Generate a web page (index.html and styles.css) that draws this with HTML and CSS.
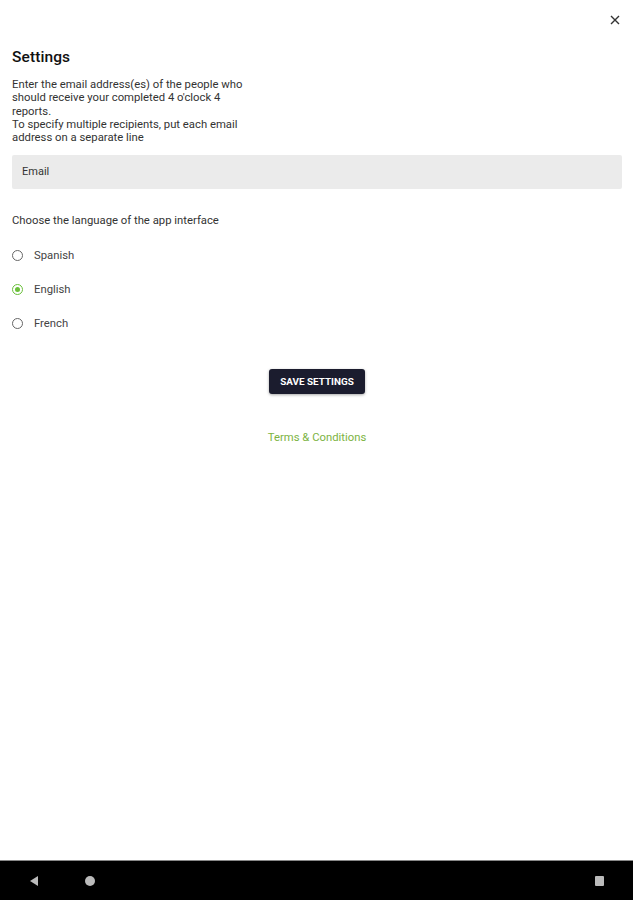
FILE: index.html
```html
<!DOCTYPE html>
<html lang="en">
<head>
  <meta charset="UTF-8">
  <meta name="viewport" content="width=device-width, initial-scale=1.0">
  <title>Settings</title>
  <link rel="stylesheet" href="styles.css">
</head>
<body>
  <div class="screen">
    <div class="topbar">
      <button class="close-btn" aria-label="Close">
        <svg width="10" height="10" viewBox="0 0 10 10"><path d="M1 1L9 9M9 1L1 9" stroke="#333" stroke-width="1.4" fill="none"/></svg>
      </button>
    </div>

    <div class="content">
      <h1>Settings</h1>
      <p class="intro">Enter the email address(es) of the people who should receive your completed 4 o'clock 4<br>reports.<br>To specify multiple recipients, put each email address on a separate line</p>

      <div class="email-field">
        <textarea placeholder="Email" rows="1"></textarea>
      </div>

      <p class="lang-title">Choose the language of the app interface</p>

      <div class="radio-list">
        <label class="radio-row">
          <input type="radio" name="lang" value="es">
          <span class="radio-dot"></span>
          Spanish
        </label>
        <label class="radio-row">
          <input type="radio" name="lang" value="en" checked>
          <span class="radio-dot"></span>
          English
        </label>
        <label class="radio-row">
          <input type="radio" name="lang" value="fr">
          <span class="radio-dot"></span>
          French
        </label>
      </div>

      <div class="actions">
        <button class="save-btn">SAVE SETTINGS</button>
        <a href="#" class="terms">Terms &amp; Conditions</a>
      </div>
    </div>

    <div class="navbar">
      <span class="nav-back"></span>
      <span class="nav-home"></span>
      <span class="nav-spacer"></span>
      <span class="nav-recent"></span>
    </div>
  </div>
</body>
</html>
```

FILE: styles.css
```css
html, body {
  margin: 0;
  padding: 0;
  height: 100%;
}
body {
  font-family: Roboto, 'Noto Sans', sans-serif;
  background: #fff;
  color: #222;
}
.screen {
  height: 900px;
  display: flex;
  flex-direction: column;
}
.topbar {
  display: flex;
  justify-content: flex-end;
  padding: 14px 12px 0 0;
  height: 22px;
}
.close-btn {
  background: none;
  border: none;
  padding: 0;
  width: 12px;
  height: 12px;
  cursor: pointer;
  display: flex;
  align-items: center;
  justify-content: center;
}
.content {
  flex: 1;
  padding: 0 11px 0 12px;
}
h1 {
  font-size: 15.5px;
  font-weight: 500;
  line-height: 18px;
  margin: 12px 0 12px;
  color: #111;
  letter-spacing: 0.1px;
}
.intro {
  font-size: 11.3px;
  line-height: 13.3px;
  margin: 0 0 11px;
  width: 245px;
  color: #333;
}
.email-field {
  background: #ebebeb;
  border-radius: 2px;
  height: 34px;
  display: flex;
  align-items: center;
}
.email-field textarea {
  border: none;
  background: transparent;
  resize: none;
  outline: none;
  font-family: inherit;
  font-size: 11px;
  padding: 0 10px;
  width: 100%;
  height: 14px;
  line-height: 14px;
  overflow: hidden;
}
.email-field textarea::placeholder {
  color: #333;
}
.lang-title {
  font-size: 11.3px;
  line-height: 13px;
  margin: 25px 0 11px;
  color: #333;
}
.radio-list {
  display: flex;
  flex-direction: column;
}
.radio-row {
  display: flex;
  align-items: center;
  height: 34px;
  font-size: 11.3px;
  color: #444;
  cursor: pointer;
}
.radio-row input {
  display: none;
}
.radio-dot {
  width: 9px;
  height: 9px;
  border: 1.3px solid #666;
  border-radius: 50%;
  margin-right: 11px;
  position: relative;
  box-sizing: content-box;
}
.radio-row input:checked + .radio-dot {
  border-color: #6abf3a;
}
.radio-row input:checked + .radio-dot::after {
  content: '';
  position: absolute;
  left: 2px;
  top: 2px;
  width: 5px;
  height: 5px;
  border-radius: 50%;
  background: #6abf3a;
}
.actions {
  display: flex;
  flex-direction: column;
  align-items: center;
  margin-top: 29px;
}
.save-btn {
  background: #1b1c2e;
  color: #fff;
  border: none;
  border-radius: 3px;
  font-family: inherit;
  font-weight: 700;
  font-size: 9.9px;
  height: 25px;
  padding: 0 11px;
  box-shadow: 0 1px 3px rgba(0,0,0,0.35);
  cursor: pointer;
}
.terms {
  margin-top: 37px;
  color: #7cb342;
  font-size: 11.3px;
  line-height: 13px;
  text-decoration: none;
}
.navbar {
  height: 39px;
  background: #000;
  border-top: 1px solid #888;
  display: flex;
  align-items: center;
  padding: 0 29px;
}
.nav-back {
  width: 0;
  height: 0;
  border-top: 5px solid transparent;
  border-bottom: 5px solid transparent;
  border-right: 8px solid #bbb;
  margin-left: 1px;
}
.nav-home {
  width: 10px;
  height: 10px;
  border-radius: 50%;
  background: #bbb;
  margin-left: 47px;
}
.nav-spacer {
  flex: 1;
}
.nav-recent {
  width: 9px;
  height: 10px;
  background: #bbb;
  border-radius: 1px;
}
```
